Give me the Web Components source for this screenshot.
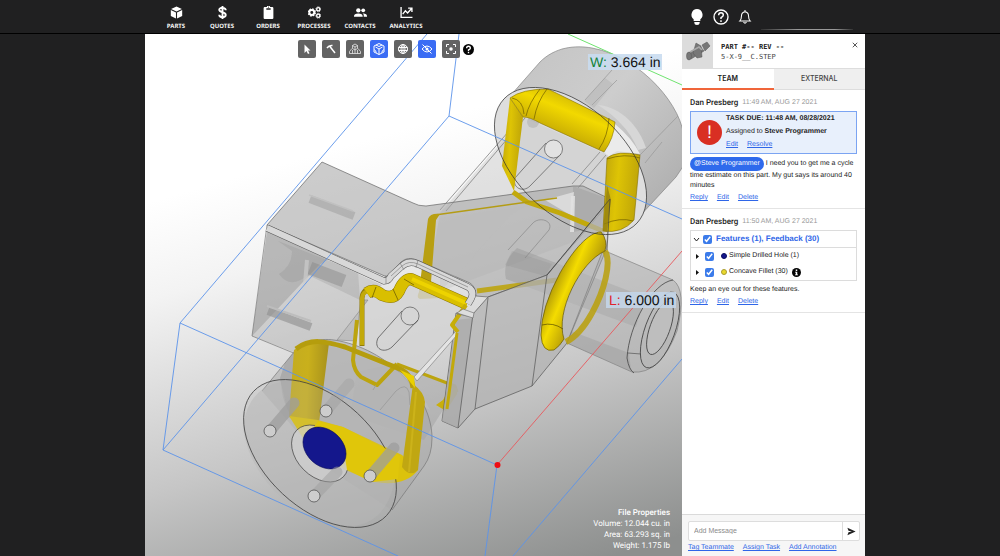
<!DOCTYPE html>
<html lang="en">
<head>
<meta charset="utf-8">
<title>Part viewer</title>
<style>
  body { margin: 0; min-height: 100vh; display: flex; background: #202021; font-family: "Liberation Sans", Arial, sans-serif; font-size: 7px; line-height: 10px; color: #222; text-rendering: geometricPrecision; }
</style>
</head>
<body>
<app-shell></app-shell>

<template id="scene">
  <svg viewBox="145 34 537 522" preserveAspectRatio="xMidYMid slice" role="img" aria-label="3D model of the part">
    <defs>
      <linearGradient id="bg" gradientUnits="userSpaceOnUse" x1="330" y1="150" x2="460" y2="600">
        <stop offset="0" stop-color="#fff"/><stop offset=".2" stop-color="#f3f3f3"/><stop offset=".6" stop-color="#c6c6c6"/><stop offset="1" stop-color="#8d8f8e"/>
      </linearGradient>
      <linearGradient id="gold" x1="0" y1="0" x2="1" y2=".2"><stop offset="0" stop-color="#bda30c"/><stop offset=".45" stop-color="#dec405"/><stop offset="1" stop-color="#bfa508"/></linearGradient>
      <linearGradient id="goldDim" x1="0" y1="0" x2="1" y2=".1"><stop offset="0" stop-color="#c3ab20"/><stop offset=".5" stop-color="#c9b01c"/><stop offset="1" stop-color="#a8921c"/></linearGradient>
      <linearGradient id="tube" gradientUnits="userSpaceOnUse" x1="578" y1="92" x2="560" y2="136"><stop offset="0" stop-color="#c7ae06"/><stop offset=".45" stop-color="#f2d900"/><stop offset="1" stop-color="#c6aa04"/></linearGradient>
      <linearGradient id="ring" gradientUnits="userSpaceOnUse" x1="545" y1="290" x2="580" y2="305"><stop offset="0" stop-color="#9c850a"/><stop offset=".5" stop-color="#f4dc00"/><stop offset="1" stop-color="#b79d08"/></linearGradient>
      <linearGradient id="shell" x1="0" y1="0" x2="1" y2=".8"><stop offset="0" stop-color="#bcbcbc"/><stop offset=".5" stop-color="#c8c8c8"/><stop offset="1" stop-color="#a9a9a9"/></linearGradient>
    </defs>
    <rect x="145" y="34" width="537" height="522" fill="url(#bg)"/>
    <g fill="none" stroke-linejoin="round">
      <!-- upper flange -->
      <path d="M504 103 L540 62 C555 47 575 45 592 48 C642 57 684 108 684 140 L684 165 L676 177 L638 218Z" fill="url(#shell)" fill-opacity=".9" stroke="#777" stroke-width=".6"/>
      <ellipse cx="570.500" cy="161" rx="91" ry="54" transform="rotate(43 570.500 161)" fill="#dedede"/>
      <path d="M585 100 L612 70 M592 105 L617 80 M640 155 L678 116 M645 163 L662 142" stroke="#969696" stroke-width=".7"/>
      <path d="M584 101 L605 78 L613 84 L594 108Z" fill="#aaa" fill-opacity=".35"/>
      <path d="M598 105 C622 107 640 128 646 148 L638 150 C630 130 615 116 598 105Z" fill="#d7d7d7"/>
      <path d="M615 124 Q632 138 640 154 L617 151 L607 157 L605 152Z" fill="#ebebeb"/>
      <circle cx="533" cy="122" r="6" fill="#bbb"/>
      <path d="M523 117 L440 213 L425 297 L600 232 L608 155Z" fill="#c8c8c8" fill-opacity=".45"/>
      <path d="M523 115 L440 210 M525 118 L446 211" stroke="#808080" stroke-width=".8"/>
      <path d="M600 152 L572 184 M606 155 L578 188" stroke="#888" stroke-width=".8"/>
      <path d="M546 143 L515 178 C512 188 523 193 530 186 L561 154" stroke="#555" stroke-width=".7"/>
      <circle cx="553.500" cy="149" r="9" fill="#e2e2e2" stroke="#555" stroke-width=".7"/>
      <!-- rear body -->
      <path d="M267 225 L322 162 L413 203 Q418 206 426 206 L573 186 L583 186 L612 200 L547 275 L488 297 L476 296 Q476 287 470 283 L417 260 Q408 256 401 262 L387 277Z" fill="#a5a5a5" fill-opacity=".56" stroke="#666" stroke-width=".7"/>
      <path d="M573 186 L612 200 L606 226 L573 232Z" fill="#999" fill-opacity=".4"/>
      <path d="M571 196 L575 196 L574 232 L570 232Z" fill="#ddd"/>
      <path d="M545 200 L574 192 L572 216Z" fill="#e2e2e2" fill-opacity=".8"/>
      <path d="M440 290 C470 270 510 200 535 205 L440 218Z" fill="#bdbdbd" fill-opacity=".3"/>
      <path d="M513 192 L527 202 L560 213 L603 231" stroke="#c2a90b" stroke-width="5"/>
      <path d="M435 215 L557 198" stroke="#b49c14" stroke-width="1.500"/>
      <path d="M428 219 Q430 213 440 214 L436 220 L430 294 L440 298 L420 299 Q416 298 419 292Z" fill="#b89f12"/>
      <path d="M477 291 L557 280" stroke="#bda40e" stroke-width="5" stroke-opacity=".9"/>
      <path d="M508 250 L532 224 C538 216 554 220 549 230 L525 258" stroke="#8f8f8f" stroke-width=".8"/>
      <path d="M517 248 L645 297 L636 327 L506 279 Q502 262 517 248Z" fill="#868686" fill-opacity=".3"/>
      <path d="M512 251 L552 264 L545 276 L505 265Z" fill="#888" fill-opacity=".2"/>
      <!-- left block -->
      <path d="M267 231 L252 336 L296 353 L337 341 L368 300 L382 285Z" fill="#b0b0b0" fill-opacity=".45"/>
      <path d="M267 231 L252 336 L318 266 L330 258Z" fill="#8c8c8c" fill-opacity=".4"/>
      <path d="M267 225 L252 336 L296 354" stroke="#777" stroke-width=".7"/>
      <path d="M310 199 L354 216" stroke="#9b9b9b" stroke-opacity=".5" stroke-width="8"/>
      <path d="M309 195 L353 211" stroke="#c0c0c0" stroke-width="1.500"/>
      <path d="M268 311 L311 327" stroke="#929292" stroke-opacity=".65" stroke-width="8"/>
      <path d="M267 306 L311 321" stroke="#bdbdbd" stroke-width="2"/>
      <path d="M278 241 L358 272 L360 300 L308 275 Q290 290 279 274 Q292 266 292 251Z" fill="#8c8c8c" fill-opacity=".25"/>
      <path d="M310 268 L344 281" stroke="#858585" stroke-opacity=".45" stroke-width="13"/>
      <path d="M307 260 L305 284" stroke="#ccc" stroke-width="4" stroke-opacity=".7"/>
      <!-- lower arm -->
      <path d="M362 298 L384 293 L397 299 L410 281 L467 306 L452 325 L457 331 L414 380 L430 410 L357 372Z" fill="#d3d3d3" fill-opacity=".82"/>
      <path d="M368 300 L337 340 L356 341 L361 300Z" fill="#a9a9a9" fill-opacity=".6" stroke="#888" stroke-width=".6"/>
      <path d="M402 311 L378 338 C373 349 384 354 392 347 L418 320" stroke="#555" stroke-width=".8"/>
      <circle cx="410" cy="316" r="9" stroke="#555" stroke-width=".7"/>
      <path d="M357 372 L397 363 L457 388 L443 410 L424 440 L350 415Z" fill="#9a9a9a" fill-opacity=".4"/>
      <!-- lower flange -->
      <path d="M262 391 L290 357 C302 341 320 338 334 340 C388 348 432 396 432 438 Q432 455 424 466 L392 510 L330 470Z" fill="#a8a8a8" fill-opacity=".5"/>
      <path d="M262 391 L290 357 C302 341 320 338 334 340 C388 348 432 396 432 438 Q432 455 424 466 L392 510" stroke="#777" stroke-width=".7"/>
      <path d="M280 378 L282 392 Q283 402 291 416 L295 350 L285 363Z" fill="#8d8d8d" fill-opacity=".4"/>
      <path d="M328 345 L345 350 L405 374 L413 386 L403 460 L318 422Z" fill="#b5b5b5" fill-opacity=".8"/>
      <path d="M357 320 L353 360 Q354 371 361 377 L377 385 L397 364" stroke="#bca40e" stroke-width="4"/>
      <path d="M397 364 L455 386 L457 392" stroke="#bca40e" stroke-width="3"/>
      <path d="M294 350 Q306 340 329 343 L319 423 Q303 427 289 417Z" fill="url(#goldDim)"/>
      <path d="M296 349 C310 338 325 341 345 347 L400 369 Q412 375 413 388" stroke="#b59d0d" stroke-width="5"/>
      <path d="M443 400 L450 387 Q459 385 457 394 L446 411 L436 405Z" fill="#c9af0c"/>
      <path d="M380 410 L396 391 Q406 382 409 392 L410 405 M376 385 L373 390" stroke="#999" stroke-width=".8"/>
      <path d="M289 416 L318 420 L343 427 L402 455 L418 470 Q405 487 375 482 L345 470 L303 438Z" fill="#dcc20b"/>
      <path d="M413 384 Q424 392 425 402 L418 470 Q410 478 402 467Z" fill="#c0a712"/>
      <path d="M416 392 L409 472" stroke="#ccb31a" stroke-width="2"/>
      <path d="M243 427 C250 482 300 525 353 526 Q392 522 397 465 Q388 478 370 479 L302 440 L289 417 L281 382 Q248 388 243 427Z" fill="#b8b8b8" fill-opacity=".5"/>
      <ellipse cx="320" cy="453.500" rx="91" ry="55" transform="rotate(43 320 453.500)" fill="#b5b5b5" fill-opacity=".2" stroke="#444" stroke-width=".8"/>
      <ellipse cx="320" cy="453.500" rx="33" ry="23" transform="rotate(45 320 453.500)" fill="#d1d1d1" fill-opacity=".7" stroke="#444" stroke-width=".7"/>
      <path d="M306 439 L318 421 L343 427 L400 456 L398 479 L372 482 L347 470 L344 450Z" fill="#e0c60a"/>
      <ellipse cx="324.500" cy="448" rx="24" ry="18" transform="rotate(42 324.500 448)" fill="#14178c" stroke="#090b58" stroke-width=".6"/>
      <g stroke="#9d9d9d" stroke-width="11" stroke-linecap="round" stroke-opacity=".75">
        <path d="M271 430 L294 403"/><path d="M327 410 L349 384" stroke-opacity=".4"/><path d="M371 475 L394 448"/><path d="M315 495 L337 472" stroke-opacity=".5"/>
      </g>
      <g fill="#cdcdcd" stroke="#444" stroke-width=".7"><circle cx="270" cy="431" r="6"/><circle cx="326" cy="411" r="6"/><circle cx="370" cy="476" r="6"/><circle cx="314" cy="496" r="6"/></g>
      <!-- front panel -->
      <path d="M456 313 L473 314 L488 297 L547 275 L610 199 L606 250 L567 343 L532 386 L475 409 L458 428 L442 421Z" fill="#b2b2b2" fill-opacity=".72" stroke="#555" stroke-width=".7"/>
      <path d="M456 320 L473 318 L458 428 L442 421Z" fill="#a9a9a9" fill-opacity=".7"/>
      <path d="M473 314 L458 428 M488 298 L475 409 M547 275 L532 386" stroke="#555" stroke-width=".7"/>
      <path d="M610 199 L606 250 L603 250 L607 199Z" fill="#d5d5d5"/>
      <path d="M456 331 L414 377 L417 381 L457 335Z" fill="#e4e4e4" stroke="#777" stroke-width=".6"/>
      <path d="M457 333 L447 409" stroke="#c2a90a" stroke-width="3"/>
      <path d="M400 370 L414 376 L415 388Z" fill="#ead000"/>
      <!-- yellow pipe under the rim -->
      <path d="M362 346 L362 298 Q363 288 372 289" stroke="#927c08" stroke-width="5"/>
      <path d="M362 345 L362 298 Q363 290 372 291" stroke="#c2a90a" stroke-width="4"/>
      <path d="M367 293 Q374 288 382 295 Q394 300 399 291 Q404 279 411 279 L467 304" stroke="#8f7906" stroke-width="12"/>
      <path d="M367 293 Q374 288 382 295 Q394 300 399 291 Q404 279 411 279 L467 304" stroke="#d9bf00" stroke-width="11"/>
      <path d="M412 279 L466 303" stroke="#edd300" stroke-width="4"/>
      <path d="M466 305 L452 325 L458 332" stroke="#c7ae08" stroke-width="4"/>
      <path d="M376 287 L372 298 M393 289 L398 300 M404 279 L414 285" stroke="#625300" stroke-width=".7"/>
      <!-- beveled rim -->
      <path d="M267 228 L384 281 Q389 281 391 276 L402 266 Q409 260 418 264 L468 287 Q475 291 471 299 L468 304" stroke="#555" stroke-width="7"/>
      <path d="M267 228 L384 281 Q389 281 391 276 L402 266 Q409 260 418 264 L468 287 Q475 291 471 299 L468 304" stroke="#d8d8d8" stroke-width="6"/>
      <path d="M386 275 L386 284 M400 263 L404 270 M418 260 L416 268 M391 276 L402 266 Q409 260 418 264 L468 287 M457 314 L473 317" stroke="#777" stroke-width=".6"/>
      <path d="M457 313 L463 309 L474 313 L473 318Z" fill="#ddd" stroke="#666" stroke-width=".6"/>
      <!-- boss -->
      <path d="M603 250 L673 280 Q687 290 677 331 Q660 375 632 372 L567 343Z" fill="#acacac" fill-opacity=".5" stroke="#777" stroke-width=".6"/>
      <path d="M571 331 L629 353 L631 371 L567 343Z" fill="#777" fill-opacity=".2"/>
      <path d="M673 280 C652 283 629 325 627 358 Q629 370 634 373" stroke="#444" stroke-width=".8"/>
      <path d="M628 353 L641 354" stroke="#555" stroke-width=".7"/>
      <ellipse cx="660" cy="330" rx="15" ry="40" transform="rotate(20 660 330)" fill="#b8b8b8" fill-opacity=".5" stroke="#444" stroke-width=".8"/>
      <ellipse cx="660" cy="328" rx="10" ry="28" transform="rotate(20 660 328)" fill="#c0c0c0" fill-opacity=".7" stroke="#444" stroke-width=".8"/>
      <!-- yellow ring round the boss -->
      <path d="M605 251 C612 263 604 291 592 313 Q580 335 566 342" stroke="#baa00b" stroke-width="6" stroke-opacity=".85"/>
      <path d="M601 232 C589 232 573 250 560 273 Q541 308 541 335 Q542 353 554 350 Q560 346 564 339 C555 312 580 262 605 251 Q608 240 601 232Z" fill="url(#ring)" stroke="#665700" stroke-width=".7"/>
      <path d="M542 325 Q553 322 563 329" stroke="#554900" stroke-width=".7"/>
      <!-- yellow fillets of the upper flange -->
      <path d="M510 98 L523 117 L514 191 L502 166Z" fill="url(#gold)"/>
      <path d="M510 98 Q522 89 548 89 L615 122 Q614 138 604 152 L540 123 Q530 117 523 117Z" fill="url(#tube)" stroke="#857100" stroke-width=".6"/>
      <path d="M540 89 Q529 103 526 116 M547 89 Q537 102 534 119 M609 118 Q608 136 599 149 M512 98 Q523 100 524 114" stroke="#6e5d00" stroke-width=".7"/>
      <path d="M607 158 Q617 150 640 155 L634 220 Q622 234 603 231Z" fill="url(#gold)" stroke="#857100" stroke-width=".6"/>
      <path d="M607 159 Q625 153 640 158 M604 224 Q620 217 633 221" stroke="#6e5d00" stroke-width=".7"/>
      <path d="M603 231 L607 185 L611 200 L607 232Z" fill="#938010" fill-opacity=".8"/>
      <ellipse cx="570.500" cy="161" rx="91" ry="54" transform="rotate(43 570.500 161)" stroke="#333" stroke-width=".7"/>
      <path d="M547 275 L610 199 L607 250" stroke="#444" stroke-width=".7"/>
      <!-- bounding box and axes -->
      <g stroke="#5b93ea" stroke-width=".9">
        <path d="M427 34 L180 323 L163 450 L398 556 M459 34 L449 116 L682 219 M449 116 L163 450 M180 323 L497 465 L485 556 M682 359 L513 556"/>
      </g>
      <path d="M568 34 L682 85" stroke="#6fe36f"/>
      <path d="M682 251 L497 465" stroke="#e8585c" stroke-width=".9"/>
      <circle cx="497.500" cy="465" r="3" fill="#ee0c14"/>
    </g>
    <g font-family="Liberation Sans, sans-serif" font-size="14" fill="#111">
      <rect x="588" y="54" width="74" height="16" fill="#c9dcf0" fill-opacity=".9"/>
      <text x="590" y="67"><tspan fill="#14823a">W:</tspan> 3.664 in</text>
      <rect x="606" y="292" width="70" height="16" fill="#c3d5e8" fill-opacity=".9"/>
      <text x="609" y="305"><tspan fill="#e0222c">L:</tspan> 6.000 in</text>
    </g>
  </svg>
</template>

<script>
const define = (name, html, after) => customElements.define(name, class extends HTMLElement {
  connectedCallback() {
    if (this.shadowRoot) return;
    this.attachShadow({ mode: 'open' }).innerHTML = typeof html === 'function' ? html(this) : html;
    if (after) after(this);
  }
});

const icons = {
  parts: '<path fill="#fff" d="M12 1 22 5.500 12 10 2 5.500zM1.500 7.500 11 12v11L1.500 18.500zM22.500 7.500 13 12v11l9.500-4.500z"/>',
  quotes: '<path fill="none" stroke="#fff" stroke-width="3.500" d="M18 8c0-6-12-6-12-1 0 6 12 3 12 9.500 0 5.500-12 5.500-12-.5M12 0v24"/>',
  orders: '<path fill="#fff" fill-rule="evenodd" d="M5 2h4a3 3 0 0 1 6 0h4q2 0 2 2v18q0 2-2 2H5q-2 0-2-2V4q0-2 2-2zm3 2v3h8V4zm4-3a1 1 0 1 0 0 2 1 1 0 0 0 0-2z"/>',
  processes: '<g fill="none" stroke="#fff"><circle cx="7" cy="12" r="4.500" stroke-width="3.500"/><circle cx="7" cy="12" r="6.500" stroke-width="2.500" stroke-dasharray="3 2.100"/><circle cx="19" cy="6" r="3" stroke-width="2.500"/><circle cx="19" cy="18" r="3" stroke-width="2.500"/><circle cx="19" cy="6" r="4.500" stroke-width="1.500" stroke-dasharray="2 1.500"/><circle cx="19" cy="18" r="4.500" stroke-width="1.500" stroke-dasharray="2 1.500"/></g>',
  contacts: '<g fill="#fff"><circle cx="8" cy="8" r="4"/><circle cx="17" cy="8" r="3.500"/><path d="M0 19q0-5 8-5t8 5v1H0zM17 14q7 0 7 5v1h-6q1-4-2-6z"/></g>',
  analytics: '<path fill="none" stroke="#fff" stroke-width="2.500" d="M2 2v19h21M5 15l5-6 4 4 7-8M15 4h7v7"/>',
  cursor: '<path fill="#fff" d="M7 3v17l4-4 3 6 3-1.500-3-5.500h5z"/>',
  hammer: '<path fill="none" stroke="#fff" stroke-width="3" d="M4 10q4-6 11-5M9 6l11 14"/>',
  assembly: '<path fill="none" stroke="#eee" stroke-width="1.500" d="M12 2l5 3v6l-5 3-5-3V5zM12 8v6M7 5l5 3 5-3M6 11l-5 6v4h22v-4l-5-6M12 14v7M7 14v7M17 14v7"/>',
  cube: '<path fill="none" stroke="#fff" stroke-width="2" d="M12 1l10 5v12l-10 5-10-5V6zM12 12v11M5 8l7 4 7-4M6 4l6 3 6-3M3 13l4 6M21 13l-4 6"/>',
  globe: '<g fill="none" stroke="#fff" stroke-width="2"><circle cx="12" cy="12" r="9"/><ellipse cx="12" cy="12" rx="4" ry="9"/><path d="M3 9h18M3 15h18M12 3v18"/></g>',
  hidden: '<path fill="none" stroke="#fff" stroke-width="2" d="M2 12q10-12 20 0-10 12-20 0zM3 3l18 18"/><circle cx="12" cy="12" r="3" fill="#fff"/>',
  focus: '<path fill="none" stroke="#fff" stroke-width="2" d="M3 8V3h5M16 3h5v5M21 16v5h-5M8 21H3v-5"/><circle cx="12" cy="12" r="3.500" fill="#fff"/>',
  help: '<circle cx="12" cy="12" r="12" fill="#050505"/><path fill="none" stroke="#fff" stroke-width="3" d="M8 9q0-4 4-4t4 4q0 2-4 4v2M12 17v3"/>',
  bulb: '<path fill="#fff" d="M12 0a8.500 8.500 0 0 0-5 15.200V18h10v-2.800A8.500 8.500 0 0 0 12 0zM8 19.500h8V21q0 3-4 3t-4-3z"/>',
  ask: '<circle cx="12" cy="12" r="10.500" fill="none" stroke="#fff" stroke-width="2"/><path fill="none" stroke="#fff" stroke-width="2.200" d="M8.500 9.500q0-4 3.500-4t3.500 3.500q0 2-3.500 4v2M12 17v2.500"/>',
  bell: '<path fill="none" stroke="#fff" stroke-width="1.800" d="M3 19h18q-3-3-3-9 0-6-6-7-6 1-6 7 0 6-3 9zM12 0v3M9.500 20.500q2.500 4 5 0"/>',
  close: '<path fill="none" stroke="#222" stroke-width="3" d="M3 3l18 18M21 3 3 21"/>',
  send: '<path fill="#222" d="M1 2 23 12 1 22l3-8 9-2-9-2z"/>',
  info: '<circle cx="12" cy="12" r="12" fill="#050505"/><path fill="#fff" d="M10 4h4v4h-4zM8 10h6v7h2v2H8v-2h2v-5H8z"/>'
};
const icon = (n, s) => `<svg viewBox="0 0 24 24" width="${s}" height="${s}" aria-hidden="true">${icons[n]}</svg>`;

define('nav-item', el => `<style>
  :host { display: block; flex: 0 0 46px; }
  a { display: flex; flex-direction: column; align-items: center; gap: 3px; color: #f4f4f4; text-decoration: none; font: 700 6px/8px "Noto Sans", sans-serif; text-transform: uppercase; }
</style><a href="#${el.getAttribute('icon')}">${icon(el.getAttribute('icon'), 13)}<slot></slot></a>`);

define('top-bar', `<style>
  :host { display: grid; grid-template-columns: 14.5% 1fr 13.5%; background: #202021; border-bottom: 1px solid #000; }
  .in { grid-column: 2; display: flex; justify-content: space-between; align-items: flex-start; height: 33px; }
  nav { display: flex; padding: 6px 0 0 8px; }
  .right { display: flex; align-items: flex-start; gap: 8px; padding-top: 9px; }
  button { border: 0; padding: 0; background: none; width: 16px; height: 16px; display: grid; place-items: center; }
  .user { width: 92px; height: 1px; margin: 20px 12px 0 0; background: linear-gradient(90deg, #333, #999 40%, #999 80%, #333); }
</style><div class="in">
  <nav><nav-item icon="parts">Parts</nav-item><nav-item icon="quotes">Quotes</nav-item><nav-item icon="orders">Orders</nav-item><nav-item icon="processes">Processes</nav-item><nav-item icon="contacts">Contacts</nav-item><nav-item icon="analytics">Analytics</nav-item></nav>
  <div class="right"><button aria-label="Tips">${icon('bulb', 16)}</button><button aria-label="Help">${icon('ask', 16)}</button><button aria-label="Notifications">${icon('bell', 14)}</button><div class="user"></div></div>
</div>`);

define('tool-button', el => `<style>
  :host { display: block; }
  button { width: 18px; height: 18px; padding: 0; border: 0; border-radius: 2px; background: #636363; display: grid; place-items: center; }
  :host([active]) button { background: #3a6cf4; }
</style><button aria-label="${el.getAttribute('icon')}">${icon(el.getAttribute('icon'), 12)}</button>`);

define('part-viewer', `<style>
  :host { display: block; position: relative; overflow: hidden; background: #ddd; }
  .scene { position: absolute; inset: 0; }
  .scene svg { display: block; width: 100%; height: 100%; }
  .tools { position: absolute; top: 6px; left: 0; right: 0; display: flex; justify-content: center; align-items: center; gap: 6px; padding-right: 56px; }
  .help { border: 0; padding: 0; background: none; display: grid; margin-left: -3px; }
  .props { position: absolute; right: 12px; bottom: 5px; text-align: right; color: #fff; font: 8px/11px Roboto, sans-serif; }
  .props b { font-weight: 500; }
</style><div class="scene"></div>
<div class="tools"><tool-button icon="cursor"></tool-button><tool-button icon="hammer"></tool-button><tool-button icon="assembly"></tool-button><tool-button icon="cube" active></tool-button><tool-button icon="globe"></tool-button><tool-button icon="hidden" active></tool-button><tool-button icon="focus"></tool-button><button class="help" aria-label="Viewer help">${icon('help', 11)}</button></div>
<div class="props"><b>File Properties</b><br>Volume: 12.044 cu. in<br>Area: 63.293 sq. in<br>Weight: 1.175 lb</div>`,
el => el.shadowRoot.querySelector('.scene').append(document.getElementById('scene').content.cloneNode(true)));

define('link-row', el => `<style>
  :host { display: flex; gap: 9px; line-height: 10px; }
  a { color: #2f66e8; text-decoration: underline; }
</style>` + el.getAttribute('items').split(',').map(t => `<a href="#">${t}</a>`).join(''));

define('comment-card', el => `<style>
  :host { display: block; padding: 8px 8px 5px; border-bottom: 1px solid #e4e4e4; }
  header { display: flex; gap: 4px; margin-bottom: 3px; line-height: 10px; color: #999; }
  b { color: #222; font: 500 8px/10px Roboto, sans-serif; }
  link-row { margin-top: 2px; }
</style><header><b>${el.getAttribute('author')}</b><time>${el.getAttribute('time')}</time></header><slot></slot><link-row items="Reply,Edit,Delete"></link-row>`);

define('task-card', `<style>
  :host { display: grid; grid-template-columns: 25px 1fr; column-gap: 4px; align-items: center; padding: 2px 6px 3px; border: 1px solid #7ba4f2; background: #e8f0fc; }
  .mark { width: 25px; height: 25px; border-radius: 50%; background: #d92f23; color: #fff; display: grid; place-items: center; font-size: 18px; line-height: 24px; }
  .body { white-space: nowrap; }
  p { margin: 0 0 3px; }
</style><div class="mark">!</div><div class="body"><p><b>TASK DUE: 11:48 AM, 08/28/2021</b></p><p>Assigned to <b>Steve Programmer</b></p><link-row items="Edit,Resolve"></link-row></div>`);

define('feature-tree', `<style>
  :host { display: block; border: 1px solid #dcdcdc; margin-bottom: 4px; }
  .row { display: flex; align-items: center; gap: 4px; height: 16px; padding-left: 3px; }
  .top { gap: 3px; padding-left: 2px; border-bottom: 1px solid #dcdcdc; color: #2f66e8; font-size: 8px; font-weight: 700; }
  label { display: flex; align-items: center; gap: 4px; }
  input { width: 9px; height: 9px; margin: 0; accent-color: #3b7bea; }
  button { border: 0; padding: 0; width: 7px; height: 7px; background: none; display: grid; place-items: center; }
  .dot { width: 4px; height: 4px; border-radius: 50%; border: 1px solid #0a0d60; background: #14178c; margin: 0 -2px 0 3px; }
  .y { background: #ead92c; border-color: #a89c30; }
</style>
<div class="row top"><button aria-label="Collapse"><svg width="7" height="7" viewBox="0 0 7 7"><path d="M1 2 3.500 5 6 2" fill="none" stroke="#222"/></svg></button><label><input type="checkbox" checked>Features (1), Feedback (30)</label></div>
<div class="row"><button aria-label="Expand"><svg width="7" height="7" viewBox="0 0 7 7"><path d="M2 1 5 3.500 2 6z" fill="#111"/></svg></button><label><input type="checkbox" checked><span class="dot"></span>Simple Drilled Hole (1)</label></div>
<div class="row"><button aria-label="Expand"><svg width="7" height="7" viewBox="0 0 7 7"><path d="M2 1 5 3.500 2 6z" fill="#111"/></svg></button><label><input type="checkbox" checked><span class="dot y"></span>Concave Fillet (30)</label>${icon('info', 9)}</div>`);

define('message-composer', `<style>
  :host { display: block; margin-top: auto; padding: 6px 5px 3px 6px; background: #f6f6f6; border-top: 1px solid #dadada; }
  form { display: flex; height: 18px; border: 1px solid #ddd; border-radius: 2px; background: #fff; margin-bottom: 2px; }
  input { flex: 1; min-width: 0; border: 0; padding: 0 5px; font: inherit; outline: 0; background: none; }
  input::placeholder { color: #8b8b8b; opacity: 1; }
  button { width: 17px; padding: 0; border: 0; border-left: 1px solid #ddd; background: none; display: grid; place-items: center; }
</style><form><input aria-label="Add Message" placeholder="Add Message"><button type="button" aria-label="Send">${icon('send', 9)}</button></form><link-row items="Tag Teammate,Assign Task,Add Annotation"></link-row>`);

define('side-panel', `<style>
  :host { display: flex; flex-direction: column; background: #fff; }
  .head { display: flex; gap: 8px; height: 34px; }
  .thumb { width: 31px; background: #dcdcdc; display: grid; place-items: center; }
  .title { flex: 1; padding-top: 8px; font: 7px/10px "DejaVu Sans Mono", monospace; white-space: nowrap; }
  .title b, .title span { display: block; } .title span { color: #444; }
  .x { border: 0; background: none; padding: 0; width: 6px; height: 6px; margin: 8px 7px 0 0; display: grid; }
  .tabs { display: grid; grid-template-columns: 1fr 1fr; }
  .tabs button { border: 0; border-top: 1px solid #ddd; border-bottom: 1px solid #ddd; background: #efefef; height: 22px; padding: 0; font: 500 7px/10px Inter, sans-serif; color: #444; }
  .tabs .on { background: #fff; border-bottom: 2px solid #f0653a; color: #222; font-weight: 600; }
  .chip { display: inline-block; padding: 0 4px; border-radius: 7px; line-height: 14px; background: #2f6aec; color: #fff; }
  p { margin: 0; } .m1 { margin-top: 3px; }
</style>
<div class="head"><div class="thumb"><svg width="26" height="26" viewBox="0 0 26 26"><g fill="#777" stroke="#555" stroke-width=".5"><path d="M2 16 15 8l4 5-13 8z"/><path d="M11 5l5 3 1 11-5 1-4-5z"/><ellipse cx="4" cy="18" rx="2.500" ry="4"/><path d="M17 7l5-3 3 4-5 5z"/></g><path d="M5 14l9-5 3 3" fill="none" stroke="#aaa" stroke-width="1.500"/></svg></div>
<div class="title"><b>PART #-- REV --</b><span>5-X-9__C.STEP</span></div><button class="x" aria-label="Close">${icon('close', 6)}</button></div>
<div class="tabs" role="tablist"><button class="on" role="tab" aria-selected="true">TEAM</button><button role="tab" aria-selected="false">EXTERNAL</button></div>
<comment-card author="Dan Presberg" time="11:49 AM, AUG 27 2021"><task-card></task-card><p class="m1"><span class="chip">@Steve Programmer</span> I need you to get me a cycle time estimate on this part. My gut says its around 40 minutes</p></comment-card>
<comment-card author="Dan Presberg" time="11:50 AM, AUG 27 2021"><feature-tree></feature-tree><p>Keep an eye out for these features.</p></comment-card>
<message-composer></message-composer>`);

define('app-shell', `<style>
  :host { flex: 1; display: flex; flex-direction: column; min-width: 0; }
  main { flex: 1; display: grid; grid-template-columns: 14.5% 1fr 18.3% 13.5%; }
  part-viewer { grid-column: 2; }
  side-panel { grid-column: 3; }
</style><top-bar></top-bar><main><part-viewer></part-viewer><side-panel></side-panel></main>`);
</script>
</body>
</html>
